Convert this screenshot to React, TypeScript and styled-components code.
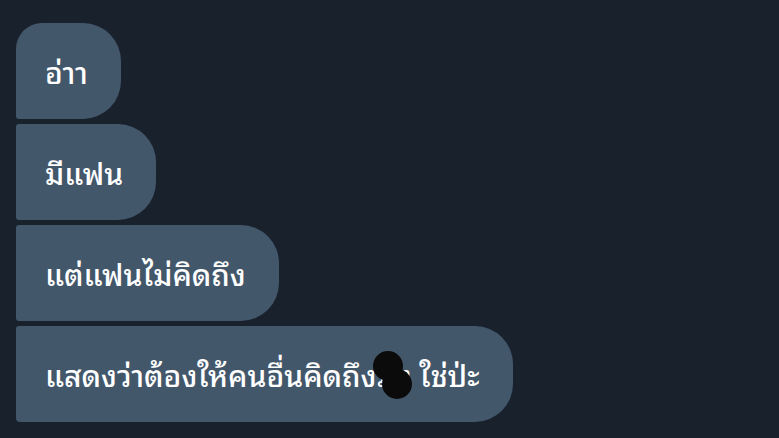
import React from "react";
import styled, { createGlobalStyle } from "styled-components";

const Global = createGlobalStyle`
  html, body { margin: 0; padding: 0; background: #19212d; }
  body { width: 779px; height: 438px; overflow: hidden; }
`;

const Page = styled.div`
  width: 779px;
  height: 438px;
  background: #19212d;
  box-sizing: border-box;
  padding: 23px 0 0 16px;
  display: flex;
  flex-direction: column;
  align-items: flex-start;
  gap: 5px;
  font-family: "Noto Sans Thai Looped", "Noto Sans Thai", "Noto Sans", sans-serif;
`;

const Bubble = styled.div<{ $first?: boolean; $last?: boolean }>`
  position: relative;
  height: 96px;
  box-sizing: border-box;
  padding: 0 33px 2px 29px;
  display: flex;
  align-items: center;
  background: #43576b;
  color: #ffffff;
  font-size: 30px;
  font-weight: 500;
  white-space: nowrap;
  border-radius: ${(p) => (p.$first ? "26px" : "3px")} 38px 38px
    ${(p) => (p.$last ? "4px" : "3px")};
`;

const Blot = styled.svg`
  position: absolute;
  left: 356px;
  top: 25px;
  width: 42px;
  height: 50px;
`;

export default function App() {
  return (
    <>
      <Global />
      <Page>
        <Bubble $first>อ่าา</Bubble>
        <Bubble>มีแฟน</Bubble>
        <Bubble>แต่แฟนไม่คิดถึง</Bubble>
        <Bubble $last>
          แสดงว่าต้องให้คนอื่นคิดถึงมึง ใช่ป่ะ
          <Blot viewBox="0 0 42 50">
            <circle cx="16" cy="15" r="15" fill="#0b0b0b" />
            <circle cx="25" cy="33" r="15" fill="#0b0b0b" />
          </Blot>
        </Bubble>
      </Page>
    </>
  );
}
